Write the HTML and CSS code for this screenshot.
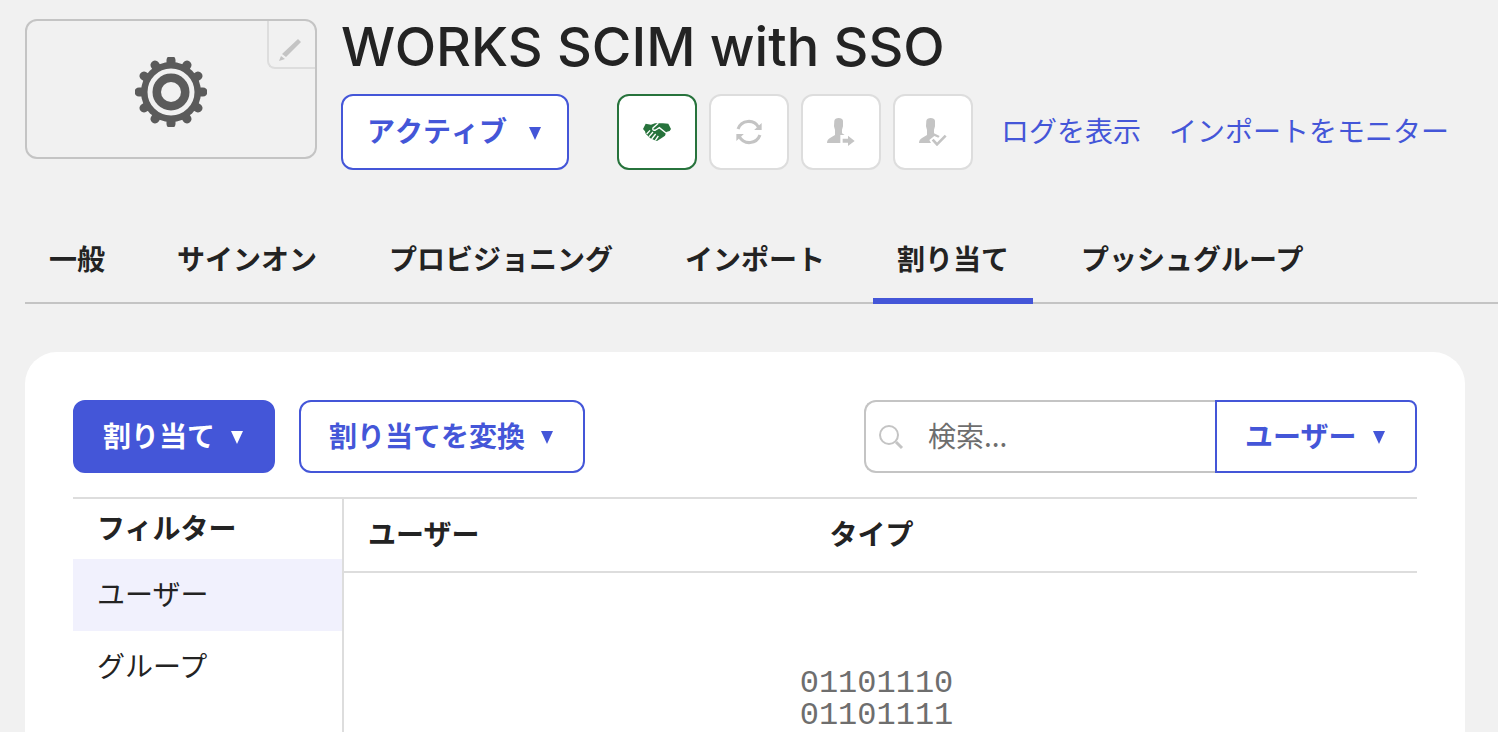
FILE: index.html
```html
<!DOCTYPE html>
<html lang="ja">
    <head>
        <title>WORKS SCIM with SSO</title>
        <meta charset="UTF-8">
        <meta name="viewport" content="width=device-width, initial-scale=1.0">
        <link rel="stylesheet" href="styles.css">
    </head>
    <body>
        <header class="app-header">
            <div class="app-logo">
                <svg class="gear" viewBox="-36 -35 72 70" width="72" height="70" aria-hidden="true">
                    <path d="M-32 0H32M0-32V32M-27-16L27 16M-27 16L27-16M-16-27L16 27M-16 27L16-27" stroke="#5b5b5b" stroke-width="9" stroke-linecap="round"/>
                    <circle r="30" fill="#5b5b5b"/>
                    <circle r="21" fill="none" stroke="#f1f1f1" stroke-width="5"/>
                    <circle r="10" fill="#f1f1f1"/>
                </svg>
                <button class="edit-logo" type="button" aria-label="ロゴを編集">
                    <svg viewBox="0 0 24 24" width="24" height="24" fill="#c4c4c4">
                        <path d="M20 1L23 4L8 19L4 16ZM3 18L7 21L1 23Z"/>
                    </svg>
                </button>
            </div>
            <div class="app-info">
                <h1>WORKS SCIM with SSO</h1>
                <div class="actions">
                    <button class="btn btn-status" type="button">アクティブ<span class="caret"></span></button>
                    <div class="icon-buttons">
                        <button class="icon-btn icon-btn-green" type="button" aria-label="フェデレーション">
                            <svg viewBox="0 0 84 54" width="28" height="18">
                                <path d="M0 18L8 2L24 5L36 1H60L76 2L84 18L80 24L70 27L66 38L56 45L42 54L32 50L22 46L8 32L6 25Z" fill="#27733c"/>
                                <path d="M46 1L30 15Q27 24 38 21L49 14L70 31M21 22L11 33M30 27L18 41M38 33L26 48M46 39L37 52" fill="none" stroke="#fff" stroke-width="4"/>
                            </svg>
                        </button>
                        <button class="icon-btn" type="button" aria-label="更新">
                            <svg viewBox="0 0 76 76" width="26" height="26">
                                <path d="M6 29A33 33 0 0 1 66 24M70 47A33 33 0 0 1 10 52" fill="none" stroke="#c4c4c4" stroke-width="9"/>
                                <path d="M75 12V32H53ZM1 64V44H23Z" fill="#c4c4c4"/>
                            </svg>
                        </button>
                        <button class="icon-btn" type="button" aria-label="ユーザーを送信">
                            <svg viewBox="0 0 84 84" width="28" height="28" fill="#c4c4c4">
                                <path d="M22 8Q24 0 35 0T48 8V25L45 35V46L53 51H40V75H0Q0 65 9 60L24 51V36L21 25Z"/>
                                <path d="M47 62H63V53L83 69L63 84V74H47Z"/>
                            </svg>
                        </button>
                        <button class="icon-btn" type="button" aria-label="ユーザーを確認">
                            <svg viewBox="0 0 84 84" width="28" height="28" fill="#c4c4c4">
                                <path d="M22 8Q24 0 35 0T48 8V25L45 35V46L62 54L58 59L46 54L31 66L36 75H0Q0 65 9 60L24 51V36L21 25Z"/>
                                <path d="M41 65L54 79L80 53" fill="none" stroke="#c4c4c4" stroke-width="8"/>
                            </svg>
                        </button>
                    </div>
                    <div class="links">
                        <a href="#log">ログを表示</a>
                        <a href="#monitor">インポートをモニター</a>
                    </div>
                </div>
            </div>
        </header>
        <nav class="tabs">
            <a href="#general">一般</a>
            <a href="#signon">サインオン</a>
            <a href="#provisioning">プロビジョニング</a>
            <a href="#import">インポート</a>
            <a href="#assignments" class="active">割り当て</a>
            <a href="#push">プッシュグループ</a>
        </nav>
        <main class="card">
            <div class="toolbar">
                <button class="btn btn-primary" type="button">割り当て<span class="caret"></span></button>
                <button class="btn" type="button">割り当てを変換<span class="caret"></span></button>
                <div class="search">
                    <label class="search-box">
                        <svg viewBox="0 0 26 26" width="26" height="26" fill="none" stroke="#c4c4c4">
                            <circle cx="11" cy="11" r="9" stroke-width="2"/>
                            <path d="M18 18L24 24" stroke-width="3"/>
                        </svg>
                        <input type="text" placeholder="検索..." aria-label="検索">
                    </label>
                    <div class="search-type">
                        <select aria-label="検索対象">
                            <option>ユーザー</option>
                            <option>グループ</option>
                        </select>
                        <span class="caret"></span>
                    </div>
                </div>
            </div>
            <div class="content">
                <aside class="filters">
                    <h2>フィルター</h2>
                    <ul>
                        <li><a href="#users" class="selected">ユーザー</a></li>
                        <li><a href="#groups">グループ</a></li>
                    </ul>
                </aside>
                <div class="list">
                    <table>
                        <thead>
                            <tr>
                                <th class="col-user">ユーザー</th>
                                <th>タイプ</th>
                            </tr>
                        </thead>
                        <tbody>
                            <tr>
                                <td colspan="2" class="empty">01101110<br>01101111</td>
                            </tr>
                        </tbody>
                    </table>
                </div>
            </div>
        </main>
    </body>
</html>
```
FILE: styles.css
```css
* {
    box-sizing: border-box;
}
body {
    display: flex;
    flex-direction: column;
    min-height: 100vh;
    margin: 0;
    padding: 19px 0 0 25px;
    background: #f1f1f1;
    color: #232323;
    font-family: "Noto Sans CJK JP", sans-serif;
    font-size: 28px;
    line-height: 40px;
}
a {
    color: inherit;
    text-decoration: none;
}
button, input, select {
    font: inherit;
    color: inherit;
}
button {
    cursor: pointer;
}

/* App header */
.app-header {
    display: flex;
    align-items: flex-start;
    gap: 24px;
}
.app-logo {
    position: relative;
    display: flex;
    flex: none;
    align-items: center;
    justify-content: center;
    width: 292px;
    height: 140px;
    border: 2px solid #c4c4c4;
    border-radius: 12px;
}
.gear {
    margin-top: 6px;
}
.edit-logo {
    position: absolute;
    top: 0;
    right: 0;
    display: flex;
    align-items: flex-end;
    justify-content: center;
    width: 48px;
    height: 48px;
    padding: 0 4px 5px 0;
    background: none;
    border: solid #ddd;
    border-width: 0 0 2px 2px;
    border-radius: 0 0 0 8px;
}
h1 {
    margin: 0 0 19px;
    font-family: Inter, sans-serif;
    font-size: 54px;
    font-weight: 500;
    line-height: 56px;
}
.actions {
    display: flex;
    align-items: center;
    white-space: nowrap;
}
.btn {
    display: flex;
    align-items: center;
    gap: 16px;
    height: 73px;
    padding: 0 30px 4px 28px;
    background: #fff;
    border: 2px solid #4456d8;
    border-radius: 12px;
    color: #4456d8;
    font-weight: 600;
    font-kerning: none;
}
.btn-status {
    gap: 22px;
    height: 76px;
    padding: 0 26px 4px 24px;
}
.btn-primary {
    background: #4456d8;
    color: #fff;
}
.caret {
    border: 6px solid transparent;
    border-top: 13px solid currentColor;
    border-bottom: 0;
}
.btn .caret {
    margin-top: 6px;
}
.icon-buttons {
    display: flex;
    gap: 12px;
    margin: 0 28px 0 48px;
}
.icon-btn {
    display: flex;
    align-items: center;
    justify-content: center;
    width: 80px;
    height: 76px;
    padding: 0;
    background: #fff;
    border: 2px solid #ddd;
    border-radius: 12px;
}
.icon-btn-green {
    border-color: #27733c;
}
.links {
    display: flex;
    gap: 28px;
    padding-bottom: 4px;
    color: #4456d8;
}

/* Tabs */
.tabs {
    display: flex;
    gap: 24px;
    margin-top: 68px;
    box-shadow: inset 0 -2px #c4c4c4;
    font-weight: 600;
    white-space: nowrap;
}
.tabs a {
    padding: 0 24px 20px;
    border-bottom: 6px solid transparent;
}
.tabs .active {
    border-bottom-color: #4456d8;
}

/* Assignments */
.card {
    display: flex;
    flex: 1;
    flex-direction: column;
    margin: 48px 33px 0 0;
    padding: 48px 48px 0;
    background: #fff;
    border-radius: 32px 32px 0 0;
}
.toolbar {
    display: flex;
    gap: 24px;
    margin-bottom: 24px;
    white-space: nowrap;
}
.search {
    display: flex;
    margin-left: auto;
}
.search-box {
    display: flex;
    align-items: center;
    gap: 24px;
    width: 351px;
    padding-left: 12px;
    border: 2px solid #c4c4c4;
    border-right: 0;
    border-radius: 12px 0 0 12px;
}
.search-box svg {
    flex: none;
}
.search-box input {
    flex: 1;
    min-width: 0;
    padding: 0 0 4px;
    border: 0;
    outline: 0;
    background: none;
}
.search-box input::placeholder {
    color: #6e6e6e;
    opacity: 1;
}
.search-type {
    position: relative;
    color: #4456d8;
}
.search-type select {
    width: 202px;
    height: 73px;
    padding: 0 28px 4px;
    appearance: none;
    background: #fff;
    border: 2px solid #4456d8;
    border-radius: 0 8px 8px 0;
    font-weight: 600;
}
.search-type .caret {
    position: absolute;
    top: 31px;
    right: 32px;
    pointer-events: none;
}
.content {
    display: flex;
    flex: 1;
    border-top: 2px solid #ddd;
}
.filters {
    flex: none;
    width: 271px;
    border-right: 2px solid #ddd;
}
.filters h2 {
    margin: 0;
    padding: 8px 24px 12px;
    font-size: 28px;
    font-weight: 600;
}
.filters ul {
    margin: 0;
    padding: 0;
    list-style: none;
}
.filters li a {
    display: block;
    padding: 14px 24px 18px;
}
.filters .selected {
    background: #f1f1fd;
}
.list {
    flex: 1;
}
table {
    width: 100%;
    border-collapse: separate;
    border-spacing: 0;
}
th {
    padding: 14px 24px 18px;
    border-bottom: 2px solid #ddd;
    font-weight: 600;
    text-align: left;
}
.col-user {
    width: 43%;
}
.empty {
    padding: 95px 8px 0 0;
    color: #6e6e6e;
    font-family: "Liberation Mono", monospace;
    font-size: 32px;
    line-height: 32px;
    text-align: center;
}
```
